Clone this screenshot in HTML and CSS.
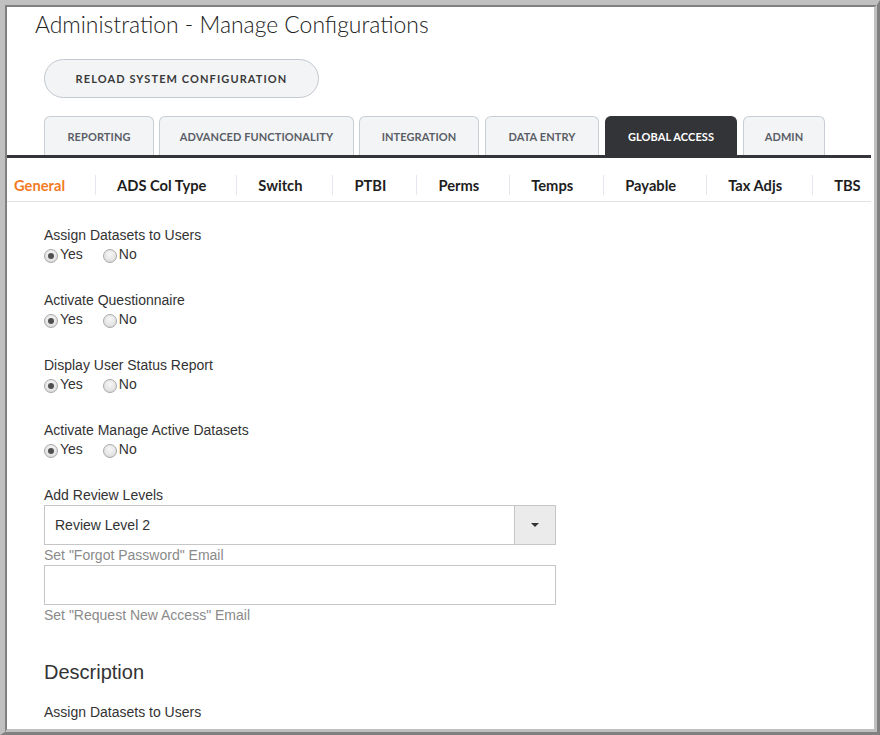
FILE: index.html
```html
<!DOCTYPE html>
<html>
<head>
<meta charset="utf-8">
<link rel="stylesheet" href="styles.css">
</head>
<body>
<div class="frame">
  <div class="inner">
    <h1 class="title">Administration - Manage Configurations</h1>
    <div class="btn-row"><button class="reload">RELOAD SYSTEM CONFIGURATION</button></div>
    <div class="tabs">
      <div class="tab t1">REPORTING</div>
      <div class="tab t2">ADVANCED FUNCTIONALITY</div>
      <div class="tab t3">INTEGRATION</div>
      <div class="tab t4">DATA ENTRY</div>
      <div class="tab t5 active">GLOBAL ACCESS</div>
      <div class="tab t6">ADMIN</div>
    </div>
    <div class="subtabs">
      <div class="sub first current">General</div>
      <div class="sub">ADS Col Type</div>
      <div class="sub">Switch</div>
      <div class="sub">PTBI</div>
      <div class="sub">Perms</div>
      <div class="sub">Temps</div>
      <div class="sub">Payable</div>
      <div class="sub">Tax Adjs</div>
      <div class="sub last">TBS</div>
    </div>
    <div class="form">
      <div class="group">
        <div class="label">Assign Datasets to Users</div>
        <div class="radios"><span class="radio on"></span><span class="rtext">Yes</span><span class="radio"></span><span class="rtext">No</span></div>
      </div>
      <div class="group">
        <div class="label">Activate Questionnaire</div>
        <div class="radios"><span class="radio on"></span><span class="rtext">Yes</span><span class="radio"></span><span class="rtext">No</span></div>
      </div>
      <div class="group">
        <div class="label">Display User Status Report</div>
        <div class="radios"><span class="radio on"></span><span class="rtext">Yes</span><span class="radio"></span><span class="rtext">No</span></div>
      </div>
      <div class="group">
        <div class="label">Activate Manage Active Datasets</div>
        <div class="radios"><span class="radio on"></span><span class="rtext">Yes</span><span class="radio"></span><span class="rtext">No</span></div>
      </div>
      <div class="label">Add Review Levels</div>
      <div class="select">
        <div class="select-value">Review Level 2</div>
        <div class="select-btn"><span class="caret"></span></div>
      </div>
      <div class="label muted">Set "Forgot Password" Email</div>
      <div class="input"></div>
      <div class="label muted">Set "Request New Access" Email</div>
      <h2 class="desc">Description</h2>
      <div class="label">Assign Datasets to Users</div>
    </div>
  </div>
</div>
</body>
</html>
```

FILE: styles.css
```css
html, body {
  margin: 0;
  padding: 0;
  background: #ffffff;
}

.frame {
  width: 880px;
  height: 735px;
  box-sizing: border-box;
  border-style: solid;
  border-width: 5px 3px 3px 5px;
  border-color: #c0c0c0 #808080 #808080 #c0c0c0;
}

.inner {
  height: 100%;
  box-sizing: border-box;
  border-style: solid;
  border-width: 2px 3px 3px 2px;
  border-color: #808080 #c0c0c0 #c0c0c0 #808080;
  background: #ffffff;
  overflow: hidden;
}

.title {
  margin: 0;
  padding: 2px 0 0 28px;
  height: 30px;
  font-family: "Lato", "Liberation Sans", sans-serif;
  font-weight: 300;
  font-size: 22.9px;
  line-height: 30px;
  color: #222222;
}

.btn-row {
  padding: 20px 0 0 37px;
}

.reload {
  display: block;
  width: 275px;
  height: 39px;
  border: 1px solid #c3c7cf;
  border-radius: 20px;
  background: #f3f4f6;
  font-family: "Lato", "Liberation Sans", sans-serif;
  font-weight: 700;
  font-size: 11px;
  letter-spacing: 1.1px;
  color: #3a3a3a;
  padding: 0;
}

.tabs {
  display: flex;
  margin-top: 18px;
  margin-right: 3px;
  padding-left: 37px;
  border-bottom: 3px solid #333438;
  height: 39px;
}

.tab {
  box-sizing: border-box;
  height: 39px;
  border: 1px solid #c9cdd5;
  border-bottom: none;
  border-radius: 6px 6px 0 0;
  background: #f3f4f6;
  font-family: "Lato", "Liberation Sans", sans-serif;
  font-weight: 700;
  font-size: 11px;
  letter-spacing: 0.1px;
  color: #5a5e66;
  display: flex;
  align-items: center;
  justify-content: center;
}

.t1 { width: 110px; }
.t2 { width: 195px; margin-left: 5px; }
.t3 { width: 120px; margin-left: 5px; }
.t4 { width: 114px; margin-left: 6px; }
.t5 { width: 132px; margin-left: 6px; }
.t6 { width: 82px; margin-left: 6px; }

.tab.active {
  background: #333438;
  border-color: #333438;
  color: #ffffff;
}

.subtabs {
  display: flex;
  align-items: flex-start;
  height: 20px;
  padding: 17px 0 6px 0;
  margin-right: 3px;
  border-bottom: 1px solid #e3e3e3;
}

.sub {
  line-height: 20px;
  height: 20px;
  padding: 0 30px 0 21px;
  border-left: 1px solid #e4e7ee;
  font-family: "Lato", "Liberation Sans", sans-serif;
  font-weight: 700;
  font-size: 14.7px;
  color: #1e1e1e;
  white-space: nowrap;
}

.sub.first {
  border-left: none;
  padding-left: 7px;
}

.sub.last {
  padding-right: 0;
}

.sub.current {
  color: #f47a1f;
}

.form {
  padding: 23px 0 0 37px;
  font-family: "Liberation Sans", Arial, sans-serif;
  font-size: 14px;
  color: #333333;
}

.group {
  margin-bottom: 25px;
}

.label {
  line-height: 20px;
  height: 20px;
}

.label.muted {
  color: #8a8a8a;
}

.radios {
  display: flex;
  align-items: flex-start;
  height: 20px;
  line-height: 18px;
}

.radio {
  box-sizing: border-box;
  width: 14px;
  height: 14px;
  border-radius: 50%;
  border: 1px solid #a8a8a8;
  background: radial-gradient(circle at 50% 35%, #f6f6f6 0%, #e6e6e6 55%, #d2d2d2 100%);
  margin-top: 4px;
  position: relative;
}

.radio.on::after {
  content: "";
  position: absolute;
  left: 3px;
  top: 3px;
  width: 6px;
  height: 6px;
  border-radius: 50%;
  background: #505050;
}

.rtext {
  margin-left: 2px;
  margin-right: 20px;
}

.select {
  box-sizing: border-box;
  width: 512px;
  height: 40px;
  border: 1px solid #c6c6c6;
  display: flex;
}

.select-value {
  flex: 1;
  line-height: 38px;
  padding-left: 10px;
}

.select-btn {
  width: 40px;
  border-left: 1px solid #c6c6c6;
  background: #ebebeb;
  display: flex;
  align-items: center;
  justify-content: center;
}

.caret {
  width: 0;
  height: 0;
  border-left: 4px solid transparent;
  border-right: 4px solid transparent;
  border-top: 4px solid #333333;
  margin-top: -1px;
}

.input {
  box-sizing: border-box;
  width: 512px;
  height: 40px;
  border: 1px solid #c6c6c6;
}

.desc {
  margin: 33px 0 16px 0;
  font-family: "Liberation Sans", Arial, sans-serif;
  font-weight: 400;
  font-size: 20px;
  line-height: 28px;
  color: #333333;
}
```
